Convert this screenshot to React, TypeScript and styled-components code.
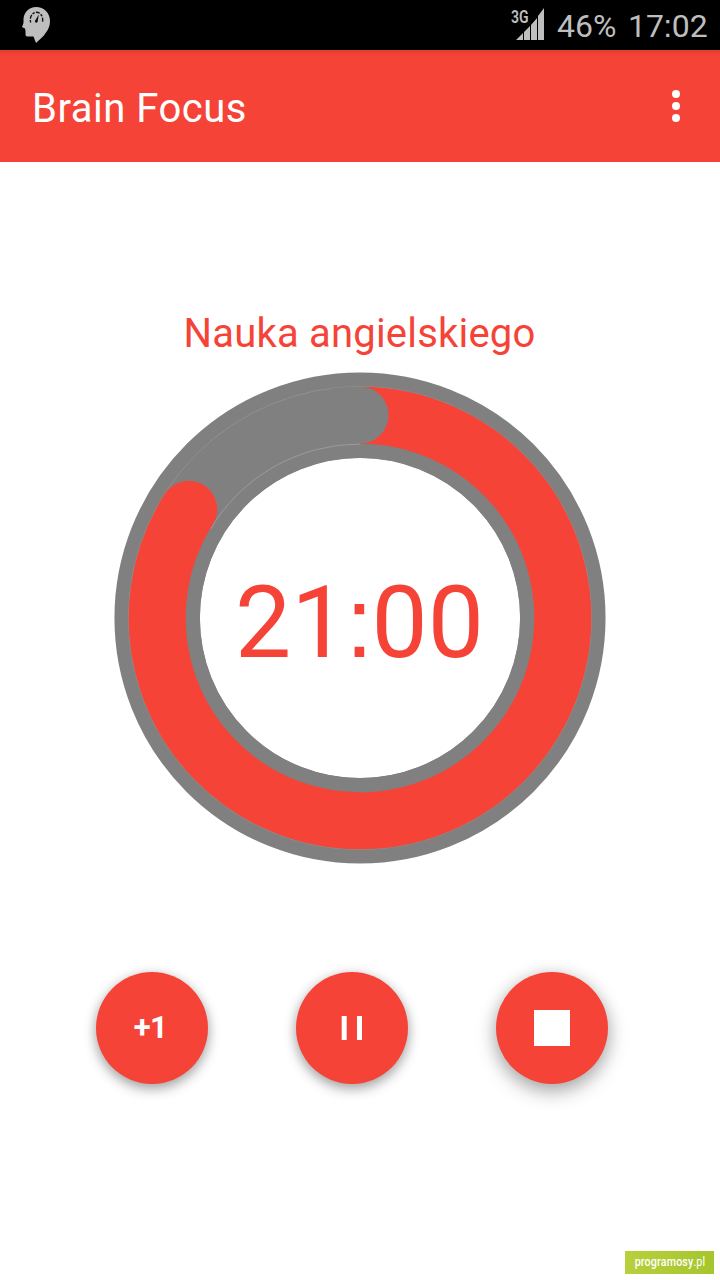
import React from "react";
import styled, { createGlobalStyle } from "styled-components";

const RED = "#f54437";
const GREY = "#808080";
const STATUS = "#bebebe";

const GlobalStyle = createGlobalStyle`
  * { box-sizing: border-box; }
  body { margin: 0; background: #fff; font-family: Roboto, "Liberation Sans", sans-serif; }
`;

const Screen = styled.div`
  width: 720px;
  height: 1280px;
  display: flex;
  flex-direction: column;
  overflow: hidden;
  background: #fff;
`;

const StatusBar = styled.header`
  height: 50px;
  flex: none;
  display: flex;
  align-items: center;
  padding: 0 12px 0 20px;
  background: #000;
  color: ${STATUS};
`;

const StatusIcons = styled.div`
  flex: 1;
  display: flex;
`;

const Signal = styled.div`
  position: relative;
  width: 36px;
  height: 50px;
  margin-right: 12px;
`;

const SignalBars = styled.svg`
  display: block;
`;

const NetworkType = styled.span`
  position: absolute;
  left: 1.5px;
  top: 6px;
  font-size: 19px;
  line-height: 22px;
  font-weight: 600;
  transform: scaleX(0.74);
  transform-origin: left;
`;

const StatusText = styled.span<{ $width: number }>`
  width: ${(p) => p.$width}px;
  padding-top: 1px;
  font-size: 32px;
  line-height: 40px;
  white-space: nowrap;
`;

const AppBar = styled.div`
  height: 112px;
  flex: none;
  display: flex;
  align-items: center;
  justify-content: space-between;
  padding: 0 32px 0 32px;
  background: linear-gradient(#e03d31, ${RED} 6px);
  color: #fff;
`;

const Title = styled.h1`
  margin: 0;
  padding-top: 5px;
  font-size: 40px;
  line-height: 48px;
  font-weight: 400;
  letter-spacing: 0.5px;
`;

const MenuButton = styled.button`
  display: flex;
  flex-direction: column;
  align-items: center;
  gap: 4px;
  width: 24px;
  padding: 0;
  border: 0;
  background: none;
`;

const Dot = styled.span`
  width: 8px;
  height: 8px;
  border-radius: 50%;
  background: #fff;
`;

const Main = styled.main`
  flex: 1;
  display: flex;
  flex-direction: column;
  align-items: center;
  padding-top: 148px;
`;

const TaskName = styled.div`
  height: 63px;
  padding-right: 1px;
  font-size: 40px;
  line-height: 48px;
  letter-spacing: 0.2px;
  color: ${RED};
`;

const Dial = styled.div`
  display: grid;
  place-items: center;
  width: 492px;
  height: 492px;
  margin-top: -1px;

  > * { grid-area: 1 / 1; }
`;

const Time = styled.div`
  height: 120px;
  margin-top: 9px;
  padding-right: 1px;
  font-size: 100px;
  line-height: 120px;
  color: ${RED};
`;

const Colon = styled.span`
  margin: 0 -0.016em 0 -0.02em;
  font-family: "Liberation Sans", sans-serif;
  line-height: 1;
`;

const Controls = styled.div`
  display: flex;
  gap: 88px;
  width: 528px;
  margin-top: 108px;
`;

const RoundButton = styled.button<{ $raised?: boolean }>`
  display: flex;
  align-items: center;
  justify-content: center;
  width: 112px;
  height: 112px;
  padding: 0;
  border: 0;
  border-radius: 50%;
  background: ${RED};
  color: #fff;
  box-shadow: ${(p) =>
    p.$raised
      ? "0 8px 20px rgba(0,0,0,.28), 0 2px 16px rgba(0,0,0,.14)"
      : "0 5px 13px rgba(0,0,0,.3), 0 2px 11px rgba(0,0,0,.12)"};
`;

const PlusOne = styled.span`
  padding-right: 3px;
  font: 700 31px/36px Roboto, sans-serif;
  letter-spacing: -0.5px;
`;

const Footer = styled.footer`
  display: flex;
  justify-content: flex-end;
  padding: 0 6px 6px 0;
`;

const Badge = styled.div`
  display: flex;
  justify-content: center;
  width: 89px;
  height: 23px;
  background: linear-gradient(100deg, #b8d03c, #a5c52d);
  color: #fff;
`;

const BadgeText = styled.span`
  padding-left: 1px;
  font-size: 13px;
  line-height: 22px;
  font-weight: 500;
  white-space: nowrap;
  letter-spacing: 0.2px;
  transform: scaleX(0.82);

  span { font-weight: 400; }
`;

const BrainIcon = () => (
  <svg width="34" height="50" viewBox="20 0 34 50">
    <path
      d="M36 7C44 7 50 13 50 21c0 5-1.500 8-4 11.500L43.500 36 36 43l-2.500-6.500H27.500c-1.500 0-2-.8-2-2.500V31l-.5-2.500-3-1.500 1.500-4V19C24 12 29 7 36 7Z"
      fill={STATUS}
    />
    <path d="M30.700 22.500a6.200 7.600 0 1 1 11.600 0" fill="none" stroke="#111" strokeWidth="1.400" strokeDasharray="2.500 1.300 4 1.300" />
    <path d="m38.800 14.500-1 6.300a1.500 1.500 0 1 1-2.300-.8Z" fill="#111" />
  </svg>
);

// 21 of 25 minutes remain: the arc runs 302.4 degrees clockwise from the top.
const Ring = () => (
  <svg width="492" height="492" viewBox="114 372 492 492" fill="none">
    <circle cx="360" cy="618" r="202.800" stroke={GREY} strokeWidth="85.500" />
    <circle cx="360" cy="618" r="231.500" stroke="#9a9a9a" strokeWidth=".6" />
    <path
      d="M360 415.200A202.800 202.800 0 1 1 188.770 509.330"
      stroke={RED}
      strokeWidth="57"
      strokeLinecap="round"
    />
    <path d="M331 386.700H360a28.500 28.500 0 0 1 0 57H331Z" fill={GREY} clipPath="url(#band)" />
    <clipPath id="band">
      <circle cx="360" cy="618" r="231.200" />
    </clipPath>
    <circle cx="360" cy="618" r="167" stroke={GREY} strokeWidth="13.500" />
    <path d="M210.500 529A174 174 0 0 1 360 444" stroke="#a6a6a6" strokeWidth=".7" />
  </svg>
);

export default function App() {
  return (
    <Screen>
      <GlobalStyle />
      <StatusBar>
        <StatusIcons>
          <BrainIcon />
        </StatusIcons>
        <Signal>
          <SignalBars width="36" height="50" viewBox="509 0 36 50" fill={STATUS}>
            <path d="M516 40l7-7v7ZM524 32l6-6v14h-6ZM531 25l6-7v22h-6ZM538 16l6-8v32h-6Z" />
          </SignalBars>
          <NetworkType>3G</NetworkType>
        </Signal>
        <StatusText $width={71}>46%</StatusText>
        <StatusText $width={80}>
          17<Colon>:</Colon>02
        </StatusText>
      </StatusBar>
      <AppBar>
        <Title>Brain Focus</Title>
        <MenuButton aria-label="Menu">
          <Dot />
          <Dot />
          <Dot />
        </MenuButton>
      </AppBar>
      <Main>
        <TaskName>Nauka angielskiego</TaskName>
        <Dial>
          <Ring />
          <Time>
            21<Colon>:</Colon>00
          </Time>
        </Dial>
        <Controls>
          <RoundButton>
            <PlusOne>+1</PlusOne>
          </RoundButton>
          <RoundButton aria-label="Pause">
            <svg width="22" height="24" fill="#fff">
              <path d="M.7 0h5v24h-5ZM16 0h5v24h-5Z" />
            </svg>
          </RoundButton>
          <RoundButton $raised aria-label="Stop">
            <svg width="36" height="36" fill="#fff">
              <path d="M0 0h36v36H0Z" />
            </svg>
          </RoundButton>
        </Controls>
      </Main>
      <Footer>
        <Badge>
          <BadgeText>
            programosy<span>.pl</span>
          </BadgeText>
        </Badge>
      </Footer>
    </Screen>
  );
}
